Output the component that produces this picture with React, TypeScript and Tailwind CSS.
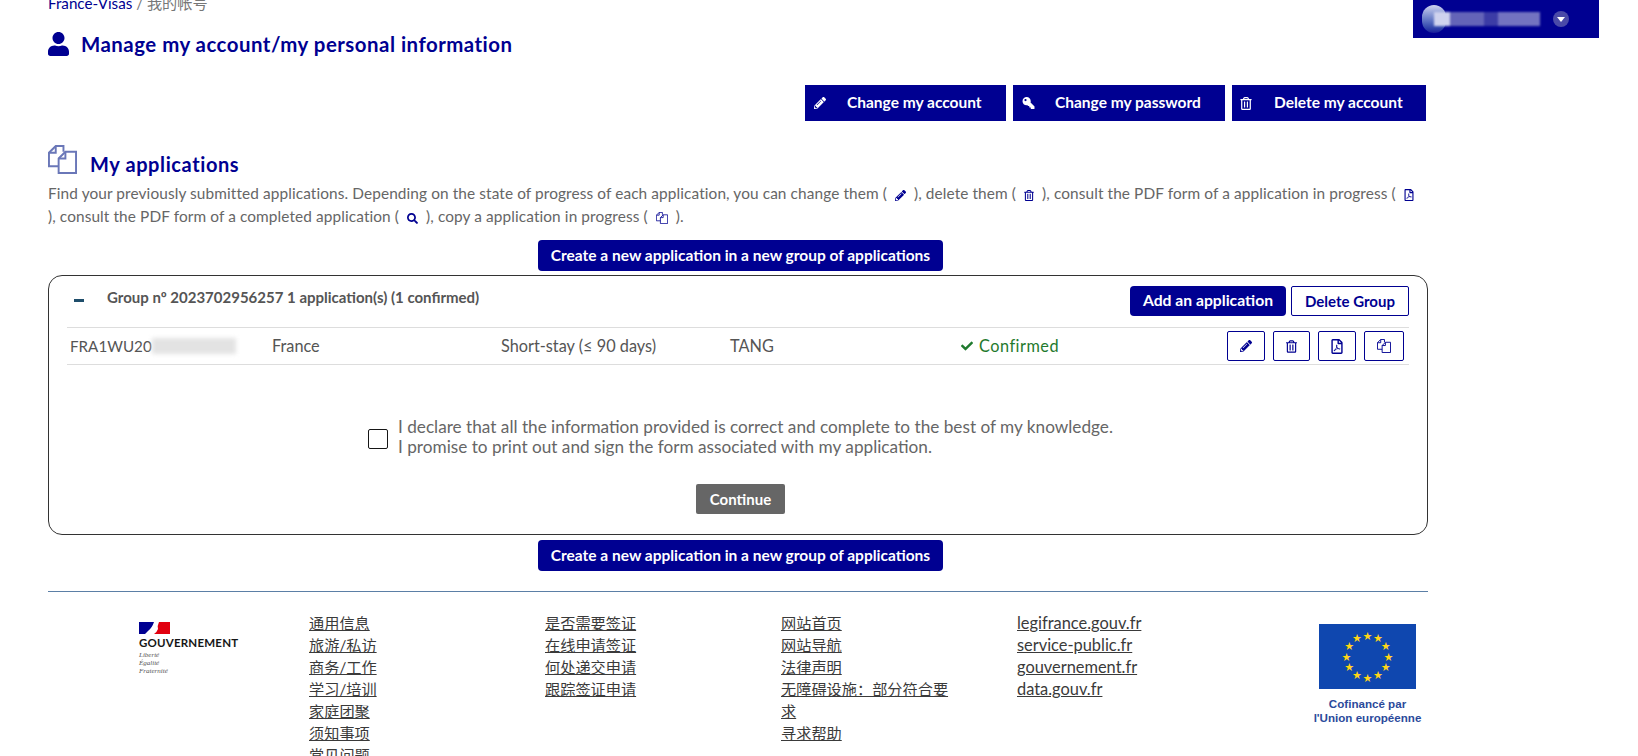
import { FaCheck, FaKey, FaPencilAlt, FaRegFilePdf, FaRegTrashAlt, FaSearch, FaUser } from 'react-icons/fa';

const CopyIcon = ({ className }: { className?: string }) => (
  <svg viewBox="0 0 30 30" fill="none" stroke="currentColor" strokeWidth="2" className={className}>
    <path d="M11 22H1V8L8 1H16V7" />
    <path d="M8 1V8H1" />
    <path d="M11 14L18 7H29V29H11Z" />
    <path d="M18 7V14H11" />
  </svg>
);

const PrimaryButton = ({ children, className = '' }: { children: React.ReactNode; className?: string }) => (
  <button className={`rounded-sm bg-[#000091] text-center font-bold text-white ${className}`}>{children}</button>
);

const CreateButton = () => (
  <div className="flex justify-center pl-[5px]">
    <PrimaryButton className="h-[31px] w-[405px] text-[15.5px]">Create a new application in a new group of applications</PrimaryButton>
  </div>
);

const AccountButton = ({ icon, label, className }: { icon: React.ReactNode; label: string; className: string }) => (
  <button className={`flex h-9 items-center bg-[#000091] text-[15.5px] font-bold text-white ${className}`}>
    {icon}
    {label}
  </button>
);

const IconButton = ({ children, className = 'w-[38px]' }: { children: React.ReactNode; className?: string }) => (
  <button className={`flex h-[30px] items-center justify-center rounded-[2px] border border-[#000091] text-[#000091] ${className}`}>{children}</button>
);

const Inline = ({ children }: { children: React.ReactNode }) => (
  <span className="mx-[8px] inline-flex translate-y-[2px] text-[#000091]">{children}</span>
);

const FooterLinks = ({ links, className }: { links: string[]; className: string }) => (
  <ul className={`leading-[22px] text-[#3a3a3a] ${className}`}>
    {links.map((l) => (
      <li key={l}>
        <a className="underline">{l}</a>
      </li>
    ))}
  </ul>
);

const stars = Array.from({ length: 12 }, (_, i) => ({
  x: 48.5 + 21 * Math.sin((i * Math.PI) / 6),
  y: 32.5 - 21 * Math.cos((i * Math.PI) / 6),
}));

export default function App() {
  return (
    <div className="h-[756px] overflow-hidden bg-white font-['Lato','Noto_Sans_CJK_SC',sans-serif] text-[#555]">
      <div className="flex items-start">
        <div className="ml-12 w-[1380px]">
          <div className="-mt-[6px] text-[15.2px] leading-[18px]">
            <span className="text-[#000091]">France-Visas</span>
            <span className="text-[#777]"> / 我的帐号</span>
          </div>
          <div className="mt-[19px] flex h-[26px] items-center">
            <FaUser className="h-[24px] w-[21px] text-[#000091]" />
            <h1 className="ml-[12px] text-[20.4px] font-bold tracking-[0.5px] text-[#000091]">Manage my account/my personal information</h1>
          </div>
        </div>
        <div className="ml-[-15px] flex h-[38px] w-[186px] items-center bg-[#000091] pl-[9px]">
          <div className="h-[28px] w-[24px] rounded-full bg-gradient-to-b from-[#cfd3ee] to-[#1a1a9a]" />
          <div className="-ml-[12px] flex h-[14px] w-[106px] blur-[1px]">
            <div className="w-[16px] bg-[#cfd3ee]" />
            <div className="w-[34px] bg-[#6464b8]" />
            <div className="w-[14px] bg-[#3c3ca6]" />
            <div className="w-[42px] bg-[#7373c0]" />
          </div>
          <div className="ml-[13px] flex h-[16px] w-[16px] items-center justify-center rounded-full bg-[#4a4aa8]">
            <div className="h-0 w-0 border-x-[4px] border-t-[5px] border-x-transparent border-t-white" />
          </div>
        </div>
      </div>

      <div className="ml-12 w-[1380px]">
        <div className="mt-[28px] flex justify-end gap-[7px] pr-[2px]">
          <AccountButton className="w-[201px]" label="Change my account" icon={<FaPencilAlt className="ml-[9px] mr-[21px] h-[12px] w-[12px]" />} />
          <AccountButton className="w-[212px]" label="Change my password" icon={<FaKey className="ml-[9px] mr-[20px] h-[12px] w-[13px] -scale-x-100" />} />
          <AccountButton className="w-[194px]" label="Delete my account" icon={<FaRegTrashAlt className="ml-[8px] mr-[22px] h-[13px] w-[12px]" />} />
        </div>

        <div className="mt-[24px] flex h-[29px] items-center">
          <CopyIcon className="h-[29px] w-[29px] text-[#6a77b8]" />
          <h2 className="ml-[13px] mt-[8px] text-[20px] font-bold tracking-[0.6px] text-[#000091]">My applications</h2>
        </div>
        <p className="mt-[8px] whitespace-nowrap text-[15.4px] leading-[23px] tracking-[0.1px] text-[#666]">
          Find your previously submitted applications. Depending on the state of progress of each application, you can change them (
          <Inline><FaPencilAlt className="h-[11px] w-[11px]" /></Inline>
          ), delete them (
          <Inline><FaRegTrashAlt className="h-[11px] w-[10px]" /></Inline>
          ), consult the PDF form of a application in progress (
          <Inline><FaRegFilePdf className="h-[12px] w-[10px]" /></Inline>
          <br />
          ), consult the PDF form of a completed application (
          <Inline><FaSearch className="h-[11px] w-[11px]" /></Inline>
          ), copy a application in progress (
          <Inline><CopyIcon className="h-[12px] w-[12px]" /></Inline>
          ).
        </p>

        <div className="mt-[12px]">
          <CreateButton />
        </div>

        <section className="mt-[4px] h-[260px] rounded-[14px] border border-[#333] px-[18px]">
          <div className="flex h-[51px] items-start">
            <div className="mt-[23px] ml-[7px] h-[3px] w-[10px] bg-[#1f4e6b]" />
            <div className="ml-[23px] mt-[11px] text-[15px] font-bold leading-[20px] text-[#555]">Group nº 2023702956257 1 application(s) (1 confirmed)</div>
            <div className="ml-auto mt-[10px] flex gap-[5px]">
              <PrimaryButton className="h-[30px] w-[156px] text-[15.7px]">Add an application</PrimaryButton>
              <button className="h-[30px] w-[118px] rounded-[2px] border border-[#000091] text-[15px] font-bold text-[#000091]">Delete Group</button>
            </div>
          </div>
          <div className="flex h-[38px] items-center border-y border-[#ddd] text-[16.3px]">
            <div className="flex w-[205px] items-center pl-[3px]">
              <span className="text-[15.2px]">FRA1WU20</span>
              <div className="h-[16px] w-[84px] bg-[#e3e3e3] blur-[2px]" />
            </div>
            <div className="w-[229px]">France</div>
            <div className="w-[229px]">Short-stay (≤ 90 days)</div>
            <div className="w-[230px]">TANG</div>
            <div className="flex items-center tracking-[0.5px] text-[#1f7a2e]">
              <FaCheck className="mr-[5px] h-[12px] w-[14px]" />
              Confirmed
            </div>
            <div className="ml-auto mr-[5px] flex gap-[8px]">
              <IconButton><FaPencilAlt className="h-[12px] w-[12px]" /></IconButton>
              <IconButton className="w-[37px]"><FaRegTrashAlt className="h-[13px] w-[11px]" /></IconButton>
              <IconButton><FaRegFilePdf className="h-[15px] w-[12px]" /></IconButton>
              <IconButton className="w-[40px]"><CopyIcon className="h-[14px] w-[14px]" /></IconButton>
            </div>
          </div>
          <div className="mt-[52px] flex items-center pl-[301px]">
            <div className="mt-[3px] h-[20px] w-[20px] rounded-[2px] border border-[#161616]" />
            <div className="ml-[10px] text-[17.2px] leading-[20px] text-[#666]">
              I declare that all the information provided is correct and complete to the best of my knowledge.
              <br />
              I promise to print out and sign the form associated with my application.
            </div>
          </div>
          <div className="mt-[27px] flex justify-center pl-[5px]">
            <button className="h-[30px] w-[89px] rounded-[2px] bg-[#666] text-[15px] font-bold text-white">Continue</button>
          </div>
        </section>

        <div className="mt-[5px]">
          <CreateButton />
        </div>

        <footer className="mt-[20px] flex border-t border-[#5b7fa6] pt-[20px]">
          <div className="ml-[91px] mt-[1px] w-[170px]">
            <svg viewBox="0 0 31 12" className="mt-[9px] h-[12px] w-[31px]">
              <rect width="31" height="12" fill="#fff" />
              <path d="M0 0H15Q13 6 9 9L6 12H0Z" fill="#000091" />
              <path d="M31 0H20Q18 4 19 7Q18 10 15 12H31Z" fill="#e1000f" />
            </svg>
            <div className="mt-[2px] text-[11.5px] font-bold leading-[14px] tracking-[0.2px] text-[#161616]">GOUVERNEMENT</div>
            <div className="mt-[1px] font-['Liberation_Serif',serif] text-[7px] italic leading-[8px] text-[#555]">
              Liberté<br />Égalité<br />Fraternité
            </div>
          </div>
          <FooterLinks className="w-[236px] text-[15.2px]" links={['通用信息', '旅游/私访', '商务/工作', '学习/培训', '家庭团聚', '须知事项', '常见问题']} />
          <FooterLinks className="w-[236px] text-[15.2px]" links={['是否需要签证', '在线申请签证', '何处递交申请', '跟踪签证申请']} />
          <div className="w-[236px]">
            <FooterLinks className="w-[170px] text-[15.2px]" links={['网站首页', '网站导航', '法律声明', '无障碍设施\uFF1A部分符合要求', '寻求帮助']} />
          </div>
          <FooterLinks className="w-[302px] text-[16.4px]" links={['legifrance.gouv.fr', 'service-public.fr', 'gouvernement.fr', 'data.gouv.fr']} />
          <div className="flex w-[97px] flex-col items-center">
            <svg viewBox="0 0 97 65" className="mt-[12px] h-[65px] w-[97px] shrink-0">
              <rect width="97" height="65" fill="#0f47af" />
              {stars.map((s, i) => (
                <text key={i} x={s.x} y={s.y + 3} fontSize="9" textAnchor="middle" fill="#ffd617">★</text>
              ))}
            </svg>
            <div className="mt-[8px] whitespace-nowrap text-center font-['Liberation_Sans',sans-serif] text-[11.6px] font-bold leading-[14px] text-[#2b4a9b]">
              Cofinancé par<br />l'Union européenne
            </div>
          </div>
        </footer>
      </div>
    </div>
  );
}
